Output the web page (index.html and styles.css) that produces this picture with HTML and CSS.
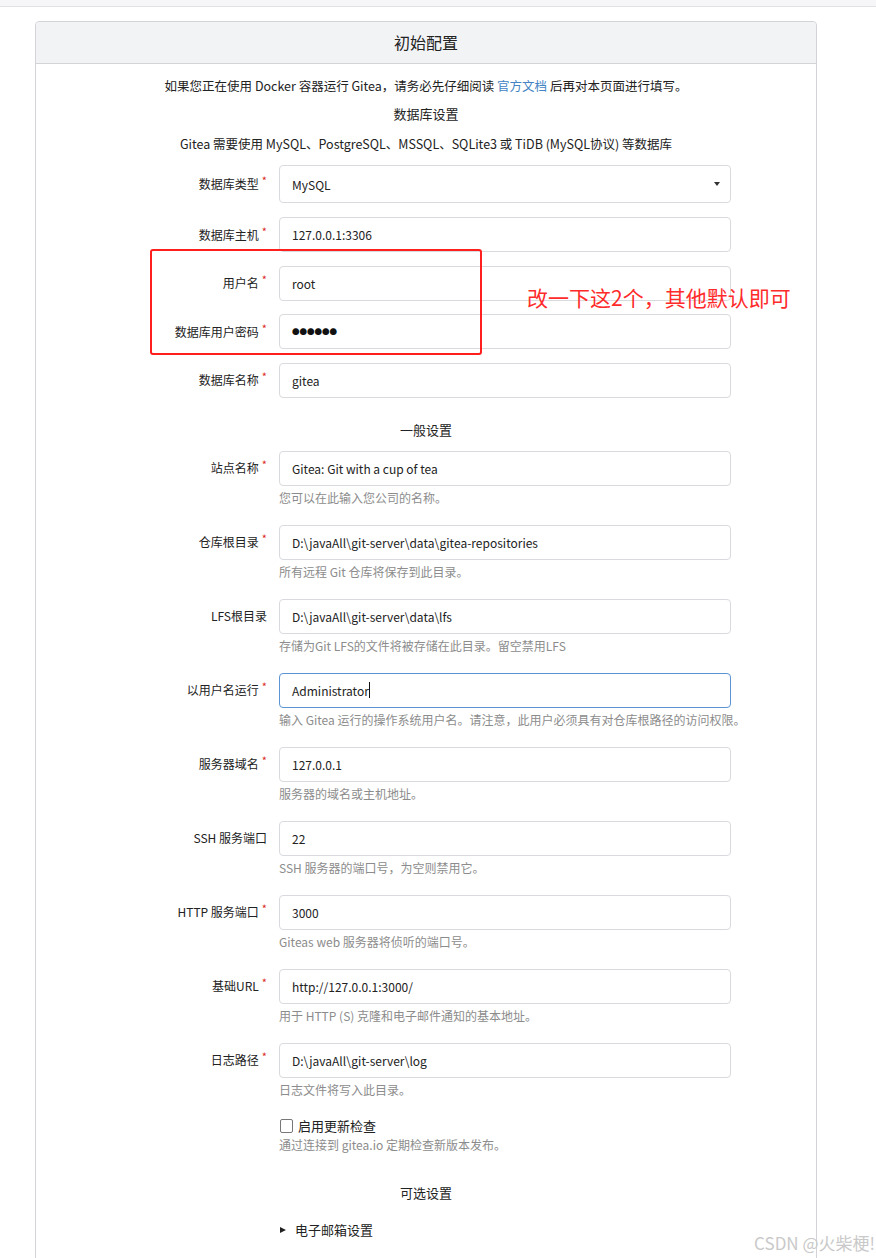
FILE: index.html
```html
<!DOCTYPE html>
<html lang="zh-CN">
<head>
<meta charset="utf-8">
<title>初始配置 - Gitea</title>
<link rel="stylesheet" href="styles.css">
</head>
<body>
<div class="topbar"></div>
<div class="page">
  <form class="card">
    <h3 class="card-header">初始配置</h3>
    <div class="card-body">
      <p class="center-line first">如果您正在使用 Docker 容器运行 Gitea，请务必先仔细阅读 <a href="#" class="link">官方文档</a> 后再对本页面进行填写。</p>
      <h4 class="section-title db-title">数据库设置</h4>
      <p class="center-line db-note">Gitea 需要使用 MySQL、PostgreSQL、MSSQL、SQLite3 或 TiDB (MySQL协议) 等数据库</p>

      <div class="db-fields">
        <div class="row">
          <label class="label required">数据库类型</label>
          <div class="dropdown"><span class="dropdown-text">MySQL</span><i class="caret"></i></div>
        </div>
        <div class="row">
          <label class="label required">数据库主机</label>
          <input class="input" type="text" value="127.0.0.1:3306">
        </div>
        <div class="row">
          <label class="label required">用户名</label>
          <input class="input" type="text" value="root">
        </div>
        <div class="row">
          <label class="label required">数据库用户密码</label>
          <input class="input password" type="text" value="●●●●●●">
        </div>
        <div class="row">
          <label class="label required">数据库名称</label>
          <input class="input" type="text" value="gitea">
        </div>
      </div>

      <h4 class="section-title general-title">一般设置</h4>

      <div class="general-fields">
        <div class="field">
          <label class="label required">站点名称</label>
          <input class="input" type="text" value="Gitea: Git with a cup of tea">
          <span class="help">您可以在此输入您公司的名称。</span>
        </div>
        <div class="field">
          <label class="label required">仓库根目录</label>
          <input class="input" type="text" value="D:\javaAll\git-server\data\gitea-repositories">
          <span class="help">所有远程 Git 仓库将保存到此目录。</span>
        </div>
        <div class="field">
          <label class="label">LFS根目录</label>
          <input class="input" type="text" value="D:\javaAll\git-server\data\lfs">
          <span class="help">存储为Git LFS的文件将被存储在此目录。留空禁用LFS</span>
        </div>
        <div class="field">
          <label class="label required">以用户名运行</label>
          <div class="input focused"><span>Administrator</span><span class="caret-line"></span></div>
          <span class="help">输入 Gitea 运行的操作系统用户名。请注意，此用户必须具有对仓库根路径的访问权限。</span>
        </div>
        <div class="field">
          <label class="label required">服务器域名</label>
          <input class="input" type="text" value="127.0.0.1">
          <span class="help">服务器的域名或主机地址。</span>
        </div>
        <div class="field">
          <label class="label">SSH 服务端口</label>
          <input class="input" type="text" value="22">
          <span class="help">SSH 服务器的端口号，为空则禁用它。</span>
        </div>
        <div class="field">
          <label class="label required">HTTP 服务端口</label>
          <input class="input" type="text" value="3000">
          <span class="help">Giteas web 服务器将侦听的端口号。</span>
        </div>
        <div class="field">
          <label class="label required">基础URL</label>
          <input class="input" type="text" value="http://127.0.0.1:3000/">
          <span class="help">用于 HTTP (S) 克隆和电子邮件通知的基本地址。</span>
        </div>
        <div class="field">
          <label class="label required">日志路径</label>
          <input class="input" type="text" value="D:\javaAll\git-server\log">
          <span class="help">日志文件将写入此目录。</span>
        </div>
        <div class="field check-field">
          <label class="checkbox"><input type="checkbox" class="check"><span>启用更新检查</span></label>
          <span class="help">通过连接到 gitea.io 定期检查新版本发布。</span>
        </div>
      </div>

      <h4 class="section-title optional-title">可选设置</h4>
      <div class="details-row">
        <span class="disclosure"></span><span class="details-text">电子邮箱设置</span>
      </div>
    </div>
  </form>

  <div class="annot-box"></div>
  <div class="annot-text">改一下这2个，其他默认即可</div>
</div>
<div class="watermark">CSDN @火柴梗!</div>
</body>
</html>
```
FILE: styles.css
```css
html, body {
  margin: 0;
  padding: 0;
  background: #ffffff;
}

body {
  font-family: "Noto Sans CJK SC", "Noto Sans", sans-serif;
  color: #222222;
  width: 876px;
  height: 1258px;
  overflow: hidden;
  position: relative;
}

.topbar {
  height: 6px;
  background: #f6f6f8;
  border-bottom: 1px solid #e2e2e4;
}

.page {
  position: relative;
  padding: 14px 0 0 35px;
}

.card {
  width: 780px;
  border: 1px solid #d4d4d8;
  border-radius: 4px;
  margin: 0;
}

.card-header {
  margin: 0;
  height: 41px;
  line-height: 41px;
  text-align: center;
  background: #f2f3f5;
  border-bottom: 1px solid #d4d4d8;
  border-radius: 4px 4px 0 0;
  font-size: 16px;
  font-weight: 400;
  color: #222;
}

.card-body {
  padding: 12px 0 40px 0;
}

.center-line {
  margin: 0;
  text-align: center;
  font-size: 12.5px;
  line-height: 20px;
  color: #222;
}

.link {
  color: #4183c4;
  text-decoration: none;
}

.section-title {
  margin: 0;
  text-align: center;
  font-size: 13px;
  line-height: 20px;
  font-weight: 400;
  color: #222;
}

.db-title { margin-top: 8px; }
.db-note { margin-top: 10px; }

.db-fields {
  margin-top: 11px;
  display: flex;
  flex-direction: column;
  gap: 13.5px;
}

.row, .field {
  display: grid;
  grid-template-columns: 231px 452px;
  column-gap: 12px;
  align-items: center;
}

.label {
  text-align: right;
  font-size: 12px;
  line-height: 18px;
  color: #222;
}

.required::after {
  content: "*";
  color: #db2828;
  font-size: 11px;
  vertical-align: top;
  margin-left: 3px;
  position: relative;
  top: -4px;
}

.input, .dropdown {
  box-sizing: border-box;
  height: 35px;
  width: 452px;
  border: 1px solid #d9dadd;
  border-radius: 4px;
  padding: 0 12px;
  font-family: "Noto Sans CJK SC", "Noto Sans", sans-serif;
  font-size: 12px;
  color: #222;
  background: #fff;
  outline: none;
  margin: 0;
}

.dropdown {
  height: 38px;
  padding-right: 10px;
  margin-bottom: 0.5px;
  display: flex;
  align-items: center;
  justify-content: space-between;
}

.caret {
  width: 0;
  height: 0;
  border-left: 3.5px solid transparent;
  border-right: 3.5px solid transparent;
  border-top: 4px solid #333;
}

.password {
  font-size: 7.5px;
  letter-spacing: 0;
  color: #111;
}

.focused {
  display: flex;
  align-items: center;
  border-color: #5b93d3;
}

.caret-line {
  display: inline-block;
  width: 1px;
  height: 16px;
  background: #111;
}

.general-title { margin-top: 22px; }

.general-fields {
  margin-top: 11px;
  display: flex;
  flex-direction: column;
  gap: 18px;
}

.field .help {
  grid-column: 2;
  margin-top: 3px;
}

.help {
  font-size: 12px;
  line-height: 18px;
  color: #8c8c8c;
  white-space: nowrap;
}

.check-field .checkbox {
  grid-column: 2;
  display: flex;
  align-items: center;
  gap: 5px;
  font-size: 13px;
  line-height: 18px;
  color: #222;
  margin-left: 1px;
}

.check-field .help {
  margin-top: 1px;
}

.check {
  appearance: none;
  -webkit-appearance: none;
  box-sizing: border-box;
  width: 13px;
  height: 14px;
  border: 1px solid #777;
  border-radius: 2px;
  margin: 0;
  background: #fff;
}

.optional-title { margin-top: 29px; }

.details-row {
  margin: 17px 0 0 244px;
  display: flex;
  align-items: center;
  font-size: 13px;
  line-height: 20px;
  color: #222;
}

.disclosure {
  width: 0;
  height: 0;
  border-top: 3.5px solid transparent;
  border-bottom: 3.5px solid transparent;
  border-left: 6px solid #222;
  margin: 0 9px 0 0;
}

.annot-box {
  position: absolute;
  left: 150px;
  top: 242px;
  width: 328px;
  height: 102px;
  border: 2px solid #ff1f1f;
  border-radius: 3px;
}

.annot-text {
  position: absolute;
  left: 527px;
  top: 276px;
  font-size: 21px;
  line-height: 28px;
  color: #ff2b2b;
  white-space: nowrap;
}

.watermark {
  position: absolute;
  right: 1px;
  top: 1231px;
  font-size: 17px;
  line-height: 24px;
  color: #c9c9c9;
  white-space: nowrap;
}
```
